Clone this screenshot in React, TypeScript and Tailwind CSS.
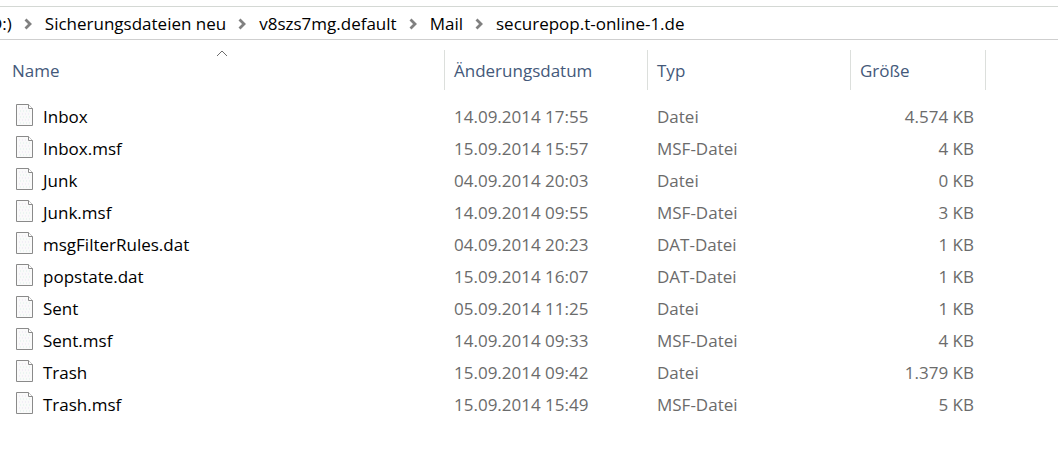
const path = ["Sicherungsdateien neu", "v8szs7mg.default", "Mail", "securepop.t-online-1.de"];

const files = [
  { name: "Inbox", date: "14.09.2014 17:55", type: "Datei", size: "4.574 KB" },
  { name: "Inbox.msf", date: "15.09.2014 15:57", type: "MSF-Datei", size: "4 KB" },
  { name: "Junk", date: "04.09.2014 20:03", type: "Datei", size: "0 KB" },
  { name: "Junk.msf", date: "14.09.2014 09:55", type: "MSF-Datei", size: "3 KB" },
  { name: "msgFilterRules.dat", date: "04.09.2014 20:23", type: "DAT-Datei", size: "1 KB" },
  { name: "popstate.dat", date: "15.09.2014 16:07", type: "DAT-Datei", size: "1 KB" },
  { name: "Sent", date: "05.09.2014 11:25", type: "Datei", size: "1 KB" },
  { name: "Sent.msf", date: "14.09.2014 09:33", type: "MSF-Datei", size: "4 KB" },
  { name: "Trash", date: "15.09.2014 09:42", type: "Datei", size: "1.379 KB" },
  { name: "Trash.msf", date: "15.09.2014 15:49", type: "MSF-Datei", size: "5 KB" },
];

const App: React.FC = () => {
  return (
    <main className="bg-white pt-1.5 pb-12 overflow-hidden font-['Open_Sans','Noto_Sans',sans-serif] text-[17px] leading-6">
      <nav
        aria-label="Pfad"
        className="flex items-center h-[34px] pt-0.5 border-y border-t-[#d4d8d4] border-b-[#cfcfcf] text-black whitespace-nowrap"
      >
        <button className="-ml-2.5">D:)</button>
        {path.map((folder) => (
          <div key={folder} className="flex items-center">
            <Chevron />
            <button>{folder}</button>
          </div>
        ))}
      </nav>

      <table className="w-full table-fixed border-separate border-spacing-0 mt-2.5 text-left whitespace-nowrap">
        <colgroup>
          <col className="w-[445px]" />
          <col className="w-[203px]" />
          <col className="w-[203px]" />
          <col className="w-[135px]" />
          <col />
        </colgroup>
        <thead>
          <tr className="h-10 text-[#44597a]">
            <HeaderCell label="Name" sorted />
            <HeaderCell label="Änderungsdatum" />
            <HeaderCell label="Typ" />
            <HeaderCell label="Größe" />
            <td></td>
          </tr>
        </thead>
        <tbody className="text-[#6b6b6b]">
          <tr className="h-[11px]">
            <td colSpan={5} className="p-0"></td>
          </tr>
          {files.map((file) => (
            <tr key={file.name} className="h-8">
              <td className="p-0 pl-4">
                <div className="flex items-center gap-2.5 text-black">
                  <FileIcon />
                  {file.name}
                </div>
              </td>
              <td className="p-0 pl-[9px]">{file.date}</td>
              <td className="p-0 pl-[9px]">{file.type}</td>
              <td className="p-0 pr-3 text-right">{file.size}</td>
              <td></td>
            </tr>
          ))}
        </tbody>
      </table>
    </main>
  );
};

const HeaderCell = ({ label, sorted }: { label: string; sorted?: boolean }) => {
  return (
    <th
      aria-sort={sorted ? "ascending" : undefined}
      className={`relative p-0 pt-0.5 font-normal border-r border-[#dcdfdc] ${sorted ? "pl-3" : "pl-[9px]"}`}
    >
      <button>{label}</button>
      {sorted && (
        <svg
          className="absolute top-0 left-1/2 -translate-x-1/2"
          width="12"
          height="7"
          viewBox="0 0 12 7"
          fill="none"
        >
          <path d="M1 6 6 1l5 5" stroke="#6d6d6d" />
        </svg>
      )}
    </th>
  );
};

const Chevron = () => {
  return (
    <svg className="mx-3" width="9" height="12" viewBox="0 0 9 12" fill="none">
      <path d="M1.5 1.5 6 6l-4.500 4.500" stroke="#808080" strokeWidth="2.8" />
    </svg>
  );
};

const FileIcon = () => {
  return (
    <svg className="-mt-1" width="17" height="22" viewBox="0 0 17 22" fill="none">
      <path d="M.5.5h12l4 4v17H.5z" fill="#fafafa" stroke="#8a8a8a" />
      <path d="M12.5.5v4h4" fill="#fff" stroke="#8a8a8a" />
      <path d="M3 4h8M3 10h11M3 16h11" stroke="#e9e2f3" strokeDasharray="1 2" />
      <path d="M4 7h10M4 13h10M4 19h10" stroke="#dcefe9" strokeDasharray="1 2" />
    </svg>
  );
};

export default App;
